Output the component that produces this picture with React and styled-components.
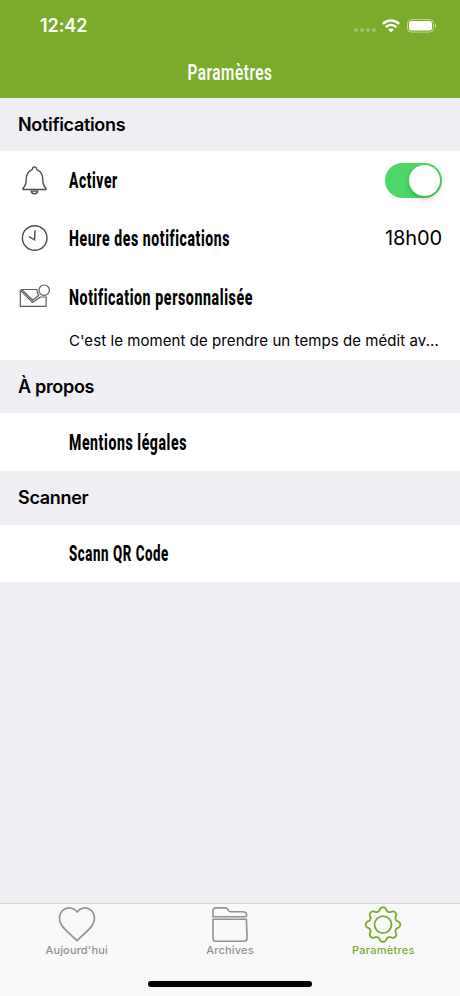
import React, { useState } from "react";
import styled, { createGlobalStyle } from "styled-components";

const GlobalStyle = createGlobalStyle`
    body {
        margin: 0;
        background-color: #efeef3;
        font-family: Inter, "Liberation Sans", sans-serif;
        color: #000;
    }
`;

const tabs = [
    { id: "today", label: "Aujourd'hui", icon: HeartIcon, spacing: 0.15 },
    { id: "archives", label: "Archives", icon: FolderIcon, spacing: 0.2 },
    { id: "settings", label: "Paramètres", icon: GearIcon, spacing: 0.25 },
];

function WifiIcon() {
    return (
        <svg width="18" height="14" viewBox="0 0 18 14" fill="none">
            <path d="M.8 4.9C5.6.3 12.4.3 17.2 4.9" stroke="#fff" strokeWidth="2.5" />
            <path d="M3.7 8.2c3.1-3 7.5-3 10.6 0" stroke="#fff" strokeWidth="2.4" />
            <path d="M9 13.4 6.1 10.5c1.600-1.500 4.200-1.500 5.800 0z" fill="#fff" />
        </svg>
    );
}

function BatteryIcon() {
    return (
        <svg width="30" height="14" viewBox="0 0 30 14" fill="none">
            <rect x=".5" y=".5" width="26" height="12.6" rx="3.8" stroke="#fff" strokeOpacity=".5" />
            <rect x="2" y="2" width="23" height="9.6" rx="2.3" fill="#fff" />
            <path d="M28 4.6c1.6.7 1.6 3.7 0 4.4z" fill="#fff" fillOpacity=".55" />
        </svg>
    );
}

function BellIcon() {
    return (
        <svg width="32" height="32" viewBox="0 0 32 32" fill="none" stroke="#4c4c4c" strokeWidth="1.4">
            <path
                d="M5.5 25.5c-.8 0-.9-.8-.4-1.3 2.4-2.2 3.1-4.5 3.1-8.1 0-5.3 1.6-8.5 5.3-9.9.6-.2.8-.6.9-1.2.3-2.9 3.9-2.9 4.2 0 .1.6.3 1 .9 1.2 3.7 1.4 5.3 4.6 5.3 9.9 0 3.6.7 5.9 3.1 8.1.5.5.4 1.3-.4 1.3z"
                strokeLinejoin="round"
            />
            <path d="M13.2 27.1h6.6c-.3 1.6-1.5 2.7-3.3 2.7s-3-1.1-3.3-2.7z" />
        </svg>
    );
}

function ClockIcon() {
    return (
        <svg width="32" height="32" viewBox="0 0 32 32" fill="none" stroke="#4c4c4c" strokeWidth="1.4">
            <circle cx="16.7" cy="16" r="12.3" />
            <path d="M17 8.2 16.6 17.8 11 14.7" />
        </svg>
    );
}

function MailIcon() {
    return (
        <svg width="32" height="32" viewBox="0 0 32 32" fill="none" stroke="#5c5c5c" strokeWidth="1.2">
            <circle cx="26.2" cy="9.2" r="5.2" />
            <path d="M20.8 14.2 14.6 19.3 3.6 8.5H19c-.3 2.2.4 4 1.8 5.700z" strokeLinejoin="round" />
            <path d="M2.3 9.2v16.2h25.8v-9.4h-5.6l-8 5.5z" strokeLinejoin="round" />
        </svg>
    );
}

function HeartIcon() {
    return (
        <svg width="40" height="38" viewBox="0 0 40 38" fill="none" stroke="currentColor" strokeWidth="1.7">
            <path
                d="M20 34.7C15 29.5 9 25.3 5 19.8 1.4 14.5 1.7 8.3 5.4 4.7 10 .5 16.8 1.3 20 6.1c3.3-4.8 10.1-5.6 14.6-1.4 3.7 3.6 3.9 9.8.3 15.1-3.9 5.5-9.9 9.7-14.9 14.9z"
                strokeLinejoin="round"
            />
        </svg>
    );
}

function FolderIcon() {
    return (
        <svg width="40" height="38" viewBox="0 0 40 38" fill="none" stroke="currentColor" strokeWidth="1.6">
            <path
                d="M3 10.7V4.7c0-1.7 1.1-2.8 3-2.8h9.3c1.5 0 2.2.6 2.7 1.9.5 1.3 1.1 1.9 2.6 1.9h12c3 0 4 .8 4 2.8 0 1.5-.4 2.2-1.4 2.2z"
                strokeLinejoin="round"
            />
            <path
                d="M3 13.2h33.4c.1 6.2.7 12.7.7 18.3 0 2.6-1 3.8-3.2 3.8H6.3c-2.2 0-3.3-1.1-3.3-3.4z"
                strokeLinejoin="round"
            />
        </svg>
    );
}

function GearIcon() {
    // eight soft teeth around the hub
    const points = [];
    for (let i = 0; i < 144; i++) {
        const a = (i / 144) * Math.PI * 2;
        const r = 15.5 + 1.8 * Math.cos(8 * a);
        const t = a + 0.02 * Math.sin(16 * a) + 0.008 * Math.sin(8 * a);
        points.push(`${(20 + r * Math.cos(t)).toFixed(2)} ${(18.6 + r * Math.sin(t)).toFixed(2)}`);
    }
    return (
        <svg width="40" height="38" viewBox="0 0 40 38" fill="none" stroke="currentColor" strokeWidth="1.8">
            <path d={`M${points.join("L")}Z`} strokeLinejoin="round" />
            <circle cx="20" cy="18.6" r="8.5" />
        </svg>
    );
}

const App = () => {
    const [enabled, setEnabled] = useState(true);
    const [activeTab, setActiveTab] = useState("settings");

    return (
        <Screen>
            <GlobalStyle />
            <Header>
                <StatusBar>
                    <Time>12:42</Time>
                    <StatusIcons>
                        <Signal>
                            <i />
                            <i />
                            <i />
                            <i />
                        </Signal>
                        <WifiIcon />
                        <BatteryIcon />
                    </StatusIcons>
                </StatusBar>
                <HeaderTitle>Paramètres</HeaderTitle>
            </Header>

            <SectionTitle $height={53}>Notifications</SectionTitle>
            <Row $height={58}>
                <IconBox>
                    <BellIcon />
                </IconBox>
                <Label $scale={0.63}>Activer</Label>
                <Toggle $on={enabled} onClick={() => setEnabled(!enabled)} />
            </Row>
            <Row $height={58}>
                <IconBox>
                    <ClockIcon />
                </IconBox>
                <Label $scale={0.64}>Heure des notifications</Label>
                <Value>18h00</Value>
            </Row>
            <Row $height={60}>
                <IconBox>
                    <MailIcon />
                </IconBox>
                <Label $scale={0.645}>Notification personnalisée</Label>
            </Row>
            <Message>C'est le moment de prendre un temps de médit av...</Message>

            <SectionTitle $height={53}>À propos</SectionTitle>
            <Row $height={58}>
                <IconBox />
                <Label $scale={0.64}>Mentions légales</Label>
            </Row>

            <SectionTitle $height={54}>Scanner</SectionTitle>
            <Row $height={57}>
                <IconBox />
                <Label $scale={0.606}>Scann QR Code</Label>
            </Row>

            <TabBar>
                {tabs.map(({ id, label, icon: Icon, spacing }) => (
                    <Tab
                        key={id}
                        $active={id === activeTab}
                        $spacing={spacing}
                        onClick={() => setActiveTab(id)}
                    >
                        <Icon />
                        <span>{label}</span>
                    </Tab>
                ))}
                <HomeIndicator />
            </TabBar>
        </Screen>
    );
};

const Screen = styled.div`
    display: flex;
    flex-direction: column;
    width: 460px;
    height: 996px;
    margin: 0 auto;
    background-color: #efeef3;
    overflow: hidden;
`;

const Header = styled.header`
    height: 98px;
    flex: none;
    background-color: #7aac2b;
    color: #fff;
`;

const StatusBar = styled.div`
    display: flex;
    align-items: center;
    justify-content: space-between;
    height: 51px;
    padding: 0 23px 0 40px;
`;

const Time = styled.span`
    font-size: 18px;
    font-weight: 600;
    letter-spacing: -0.1px;
`;

const StatusIcons = styled.div`
    display: flex;
    align-items: center;

    svg:last-child {
        margin-left: 7px;
    }
`;

const Signal = styled.div`
    display: flex;
    gap: 2px;
    margin: 9px 6px 0 0;

    i {
        width: 4px;
        height: 4px;
        border-radius: 50%;
        background-color: rgba(255, 255, 255, 0.28);
    }
`;

const HeaderTitle = styled.h1`
    margin: 0;
    font-family: Roboto, "Liberation Sans", sans-serif;
    font-size: 22.5px;
    line-height: 42px;
    font-weight: 600;
    letter-spacing: 0.8px;
    text-align: center;
    transform: scaleX(0.68);
`;

const SectionTitle = styled.h2`
    flex: none;
    height: ${(props) => props.$height}px;
    margin: 0;
    padding-left: 18px;
    font-size: 18px;
    line-height: 53px;
    font-weight: 600;
    letter-spacing: -0.32px;
`;

const Row = styled.div`
    flex: none;
    display: flex;
    align-items: center;
    height: ${(props) => props.$height}px;
    padding: 0 18px;
    background-color: #fff;
`;

const IconBox = styled.div`
    display: flex;
    width: 51px;
    flex: none;
`;

// condensed lettering
const Label = styled.span`
    flex: 1;
    white-space: nowrap;
    font-family: Roboto, "Liberation Sans", sans-serif;
    font-size: 22px;
    font-weight: 800;
    letter-spacing: 0.9px;
    transform: scaleX(${(props) => props.$scale});
    transform-origin: left center;
`;

const Toggle = styled.button`
    flex: none;
    display: flex;
    justify-content: ${(props) => (props.$on ? "flex-end" : "flex-start")};
    width: 57px;
    height: 35px;
    padding: 2px;
    border: 0;
    border-radius: 18px;
    background-color: ${(props) => (props.$on ? "#4bd864" : "#e5e5ea")};

    &::after {
        content: "";
        width: 31px;
        height: 31px;
        border-radius: 50%;
        background-color: #fff;
        box-shadow: 0 3px 6px rgba(0, 0, 0, 0.2);
    }
`;

const Value = styled.span`
    font-size: 20px;
    letter-spacing: -0.1px;
`;

const Message = styled.p`
    flex: none;
    height: 33px;
    margin: 0;
    padding-left: 69px;
    background-color: #fff;
    font-size: 15px;
    line-height: 27px;
    letter-spacing: 0.07px;
    white-space: nowrap;
`;

const TabBar = styled.nav`
    position: relative;
    display: flex;
    flex: none;
    height: 92px;
    margin-top: auto;
    border-top: 1px solid #d5d5d8;
    background-color: #f9f9f9;
`;

const Tab = styled.button`
    flex: 1;
    display: flex;
    flex-direction: column;
    align-items: center;
    padding: 1px 0 0;
    border: 0;
    background: none;
    color: ${(props) => (props.$active ? "#7aac2b" : "#929292")};
    font-family: inherit;
    font-size: 11px;
    line-height: 14px;
    font-weight: 500;
    letter-spacing: ${(props) => props.$spacing}px;

    svg {
        margin-top: 1px;
        margin-bottom: -1px;
    }
`;

const HomeIndicator = styled.div`
    position: absolute;
    bottom: 9px;
    left: 148px;
    width: 164px;
    height: 6px;
    border-radius: 3px;
    background-color: #000;
`;

export default App;
